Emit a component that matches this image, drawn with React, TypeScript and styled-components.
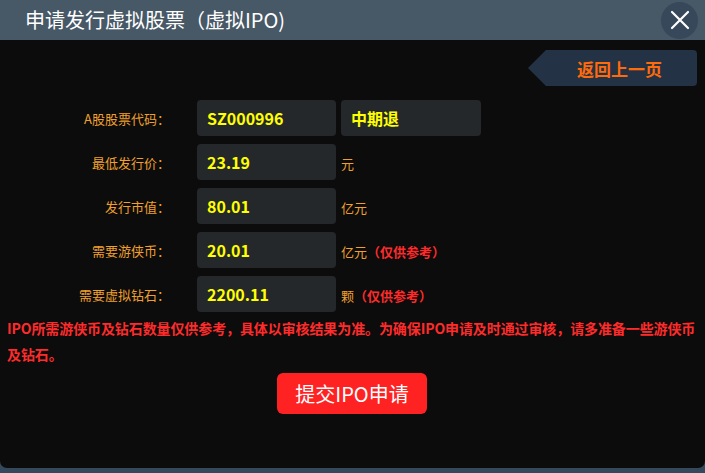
import React from 'react';
import styled, { createGlobalStyle } from 'styled-components';

const GlobalStyle = createGlobalStyle`
  html, body {
    margin: 0;
    padding: 0;
    background: #0c0c0c;
  }
  * {
    box-sizing: border-box;
  }
`;

const Dialog = styled.div`
  width: 705px;
  height: 473px;
  display: flex;
  flex-direction: column;
  background: #34495b;
  font-family: "Noto Sans CJK SC", "Noto Sans", sans-serif;
  overflow: hidden;
`;

const Header = styled.div`
  height: 40px;
  flex: none;
  display: flex;
  align-items: center;
  justify-content: space-between;
  padding: 0 7px 0 25px;
  background: #475867;
`;

const Title = styled.div`
  color: #ffffff;
  font-size: 20px;
  line-height: 40px;
`;

const CloseButton = styled.button`
  width: 37px;
  height: 37px;
  border: none;
  border-radius: 50%;
  background: #36485a;
  display: flex;
  align-items: center;
  justify-content: center;
  padding: 0;
  cursor: pointer;
`;

const Body = styled.div`
  height: 428px;
  flex: none;
  background: #0c0c0c;
  border-radius: 0 0 7px 7px;
  display: flex;
  flex-direction: column;
  padding: 10px 8px 0 7px;
`;

const TopBar = styled.div`
  display: flex;
  justify-content: flex-end;
`;

const BackButton = styled.button`
  width: 169px;
  height: 36px;
  border: none;
  border-radius: 4px;
  background: #233244;
  clip-path: polygon(0 50%, 18px 0, 100% 0, 100% 100%, 18px 100%);
  color: #ff6a0a;
  font-family: inherit;
  font-size: 17px;
  font-weight: 700;
  text-align: left;
  padding: 0 0 0 49px;
  cursor: pointer;
`;

const Form = styled.div`
  margin-top: 14px;
  display: grid;
  grid-template-columns: 190px 139px auto;
  row-gap: 8px;
  align-items: center;
`;

const Label = styled.div`
  color: #f0a02e;
  font-size: 13px;
  text-align: right;
  margin-right: 27px;
`;

const ValueBox = styled.div<{ $width?: number }>`
  width: ${(p) => p.$width ?? 139}px;
  height: 36px;
  border-radius: 4px;
  background: #25282b;
  color: #ffff00;
  font-size: 16px;
  font-weight: 700;
  line-height: 36px;
  padding-left: 10px;
`;

const Extra = styled.div`
  display: flex;
  align-items: center;
  padding-left: 5px;
`;

const Unit = styled.span`
  color: #f0a02e;
  font-size: 13px;
  padding-top: 3px;
`;

const Hint = styled.span`
  color: #ff2b2b;
  font-size: 13px;
  font-weight: 700;
  padding-top: 3px;
`;

const Notice = styled.p`
  margin: 3px -8px 0 0;
  color: #ff2b2b;
  font-size: 14px;
  font-weight: 700;
  line-height: 26px;
  letter-spacing: -0.1px;
`;

const Footer = styled.div`
  display: flex;
  justify-content: center;
  margin-top: 6px;
`;

const SubmitButton = styled.button`
  width: 150px;
  height: 41px;
  border: none;
  border-radius: 6px;
  background: #ff2222;
  color: #ffffff;
  font-family: inherit;
  font-size: 20px;
  cursor: pointer;
`;

const rows = [
  { label: '最低发行价：', value: '23.19', unit: '元' },
  { label: '发行市值：', value: '80.01', unit: '亿元' },
  { label: '需要游侠币：', value: '20.01', unit: '亿元', hint: '（仅供参考）' },
  { label: '需要虚拟钻石：', value: '2200.11', unit: '颗', hint: '（仅供参考）' },
];

export default function App() {
  return (
    <>
      <GlobalStyle />
      <Dialog>
        <Header>
          <Title>申请发行虚拟股票（虚拟IPO)</Title>
          <CloseButton aria-label="关闭">
            <svg width="20" height="20" viewBox="0 0 20 20">
              <path d="M2 2 L18 18 M18 2 L2 18" stroke="#ffffff" strokeWidth="2.2" strokeLinecap="round" />
            </svg>
          </CloseButton>
        </Header>
        <Body>
          <TopBar>
            <BackButton>返回上一页</BackButton>
          </TopBar>
          <Form>
            <Label>A股股票代码：</Label>
            <ValueBox>SZ000996</ValueBox>
            <Extra>
              <ValueBox $width={140}>中期退</ValueBox>
            </Extra>
            {rows.map((r) => (
              <React.Fragment key={r.label}>
                <Label>{r.label}</Label>
                <ValueBox>{r.value}</ValueBox>
                <Extra>
                  <Unit>{r.unit}</Unit>
                  {r.hint && <Hint>{r.hint}</Hint>}
                </Extra>
              </React.Fragment>
            ))}
          </Form>
          <Notice>
            IPO所需游侠币及钻石数量仅供参考，具体以审核结果为准。为确保IPO申请及时通过审核，请多准备一些游侠币及钻石。
          </Notice>
          <Footer>
            <SubmitButton>提交IPO申请</SubmitButton>
          </Footer>
        </Body>
      </Dialog>
    </>
  );
}
